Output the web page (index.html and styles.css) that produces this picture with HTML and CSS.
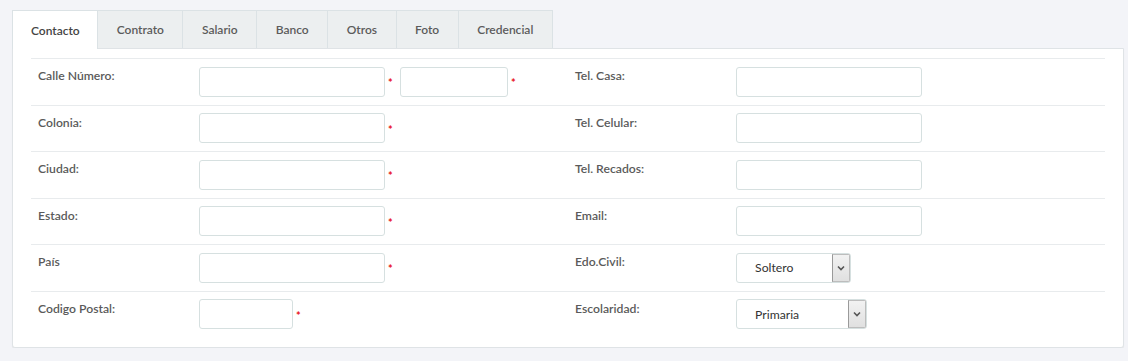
FILE: index.html
```html
<!DOCTYPE html>
<html lang="es">
<head>
<meta charset="utf-8">
<link rel="stylesheet" href="styles.css">
</head>
<body>
<div class="wrap">
  <ul class="tabs">
    <li class="tab active">Contacto</li>
    <li class="tab">Contrato</li>
    <li class="tab">Salario</li>
    <li class="tab">Banco</li>
    <li class="tab">Otros</li>
    <li class="tab">Foto</li>
    <li class="tab">Credencial</li>
  </ul>
  <div class="panel">
    <table class="form">
      <colgroup><col class="c-label"><col class="c-field"><col class="c-label"><col class="c-field"></colgroup>
      <tr>
        <td class="lbl">Calle Número:</td>
        <td><div class="fld"><span class="inp w186"></span><span class="req">*</span><span class="inp w108"></span><span class="req">*</span></div></td>
        <td class="lbl">Tel. Casa:</td>
        <td><div class="fld"><span class="inp w186"></span></div></td>
      </tr>
      <tr>
        <td class="lbl">Colonia:</td>
        <td><div class="fld"><span class="inp w186"></span><span class="req">*</span></div></td>
        <td class="lbl">Tel. Celular:</td>
        <td><div class="fld"><span class="inp w186"></span></div></td>
      </tr>
      <tr>
        <td class="lbl">Ciudad:</td>
        <td><div class="fld"><span class="inp w186"></span><span class="req">*</span></div></td>
        <td class="lbl">Tel. Recados:</td>
        <td><div class="fld"><span class="inp w186"></span></div></td>
      </tr>
      <tr>
        <td class="lbl">Estado:</td>
        <td><div class="fld"><span class="inp w186"></span><span class="req">*</span></div></td>
        <td class="lbl">Email:</td>
        <td><div class="fld"><span class="inp w186"></span></div></td>
      </tr>
      <tr>
        <td class="lbl">País</td>
        <td><div class="fld"><span class="inp w186"></span><span class="req">*</span></div></td>
        <td class="lbl">Edo.Civil:</td>
        <td><div class="fld"><div class="sel w115"><span class="sel-text">Soltero</span><span class="sel-btn"><svg width="8" height="6" viewBox="0 0 8 6"><path d="M1 1.5 L4 4.5 L7 1.5" fill="none" stroke="#555" stroke-width="1.6"/></svg></span></div></div></td>
      </tr>
      <tr>
        <td class="lbl">Codigo Postal:</td>
        <td><div class="fld"><span class="inp w94"></span><span class="req">*</span></div></td>
        <td class="lbl">Escolaridad:</td>
        <td><div class="fld"><div class="sel w131"><span class="sel-text">Primaria</span><span class="sel-btn"><svg width="8" height="6" viewBox="0 0 8 6"><path d="M1 1.5 L4 4.5 L7 1.5" fill="none" stroke="#555" stroke-width="1.6"/></svg></span></div></div></td>
      </tr>
    </table>
  </div>
</div>
</body>
</html>
```

FILE: styles.css
```css
* { box-sizing: border-box; }
html, body { margin: 0; padding: 0; }
body {
  background: #f3f4f8;
  font-family: "Source Sans Pro", Lato, "Open Sans", sans-serif;
  font-size: 12.2px;
  color: #555;
}
.wrap {
  padding: 10px 4px 0 12px;
}
.tabs {
  list-style: none;
  margin: 0;
  padding: 0;
  display: flex;
  height: 38px;
}
.tab {
  height: 38px;
  padding: 0 18.5px;
  display: flex;
  align-items: center;
  background: #eceff0;
  border: 1px solid #dbe2e5;
  border-left: none;
  border-bottom: none;
  font-weight: 600;
  color: #5b5b5b;
  font-size: 12px;
}
.tab:first-child { border-left: 1px solid #dbe2e5; padding: 0 17.5px 0 18px; }
.tab.active {
  background: #fff;
  color: #444;
  height: 39px;
  position: relative;
  z-index: 1;
}
.panel {
  background: #fff;
  border: 1px solid #dfe3e6;
  border-radius: 0 0 3px 3px;
  box-shadow: 0 1px 1px rgba(0,0,0,0.06);
  padding: 9px 18px 8px 18px;
  height: 300px;
}
.form {
  width: 100%;
  border-collapse: collapse;
  table-layout: fixed;
}
.c-label { width: 15%; }
.c-field { width: 35%; }
.form td {
  border-top: 1px solid #e8ebed;
  padding: 7.5px 7px 8px 7px;
  vertical-align: top;
}
.form td.lbl {
  font-weight: 600;
  color: #5a5a5a;
  padding-top: 8px;
  line-height: 18px;
}
.fld {
  display: flex;
  align-items: center;
  height: 30px;
}
.inp {
  display: block;
  height: 30px;
  border: 1px solid #d6e0e0;
  border-radius: 3px;
  background: #fff;
}
.w186 { width: 186px; }
.w108 { width: 108px; }
.w94 { width: 94px; }
.w115 { width: 115px; }
.w131 { width: 131px; }
.req {
  color: #e8101a;
  font-size: 11px;
  font-weight: 700;
  width: 15px;
  padding-left: 3px;
  line-height: 1;
  margin-top: 2px;
}
.sel {
  display: flex;
  height: 30px;
  border: 1px solid #d6e0e0;
  border-radius: 3px;
  background: #fff;
  overflow: hidden;
}
.sel-text {
  flex: 1;
  padding-left: 18px;
  display: flex;
  align-items: center;
  font-size: 12.2px;
  color: #333;
}
.sel-btn {
  width: 18px;
  display: flex;
  align-items: center;
  justify-content: center;
  background: linear-gradient(#f2f2f2, #e0e0e0);
  border-left: 1px solid #9a9a9a;
  border-right: 1px solid #bdbdbd;
  border-top: 1px solid #bdbdbd;
  border-bottom: 1px solid #bdbdbd;
}
```
